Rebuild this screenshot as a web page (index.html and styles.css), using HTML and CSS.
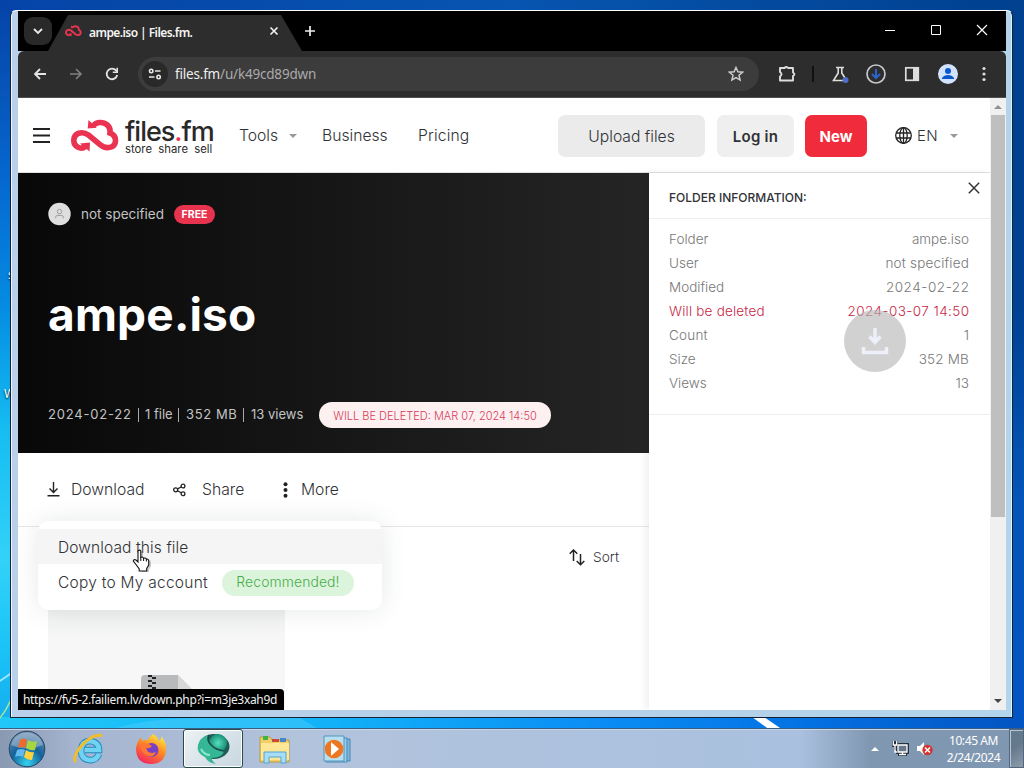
FILE: index.html
```html
<!DOCTYPE html>
<html lang="en">
<head>
<meta charset="utf-8">
<title>ampe.iso | Files.fm.</title>
<link rel="stylesheet" href="styles.css">
</head>
<body>
<div class="desktop">
  <svg class="wallpaper" width="1024" height="768" viewBox="0 0 1024 768">
    <path d="M-5 684Q5 678 14 671" stroke="#9be6ff" stroke-width="2" fill="none"/>
    <path d="M-2 720Q6 712 13 695" stroke="#9ee89a" stroke-width="1.5" fill="none"/>
    <path d="M110 730Q150 716 230 718H300L320 730Z" fill="#54cffb" opacity=".4"/>
    <path d="M752 717H764L783 730H770Z" fill="#fff"/>
  </svg>
  <span class="icon-label first">s</span>
  <span class="icon-label second">W</span>

  <div class="window">
    <div class="tabstrip">
      <div class="tab-search"><svg width="12" height="12" viewBox="0 0 12 12"><path d="M2 4l4 4 4-4" fill="none" stroke="#e8e8e8" stroke-width="1.8"/></svg></div>
      <div class="tab">
        <svg class="tab-icon" width="17" height="12" viewBox="0 0 48 34"><use href="#cloud"/></svg>
        <span class="tab-title">ampe.iso | Files.fm.</span>
        <svg width="10" height="10" viewBox="0 0 10 10"><path d="M1.5 1.5l7 7m0-7l-7 7" stroke="#eee" stroke-width="1.7"/></svg>
      </div>
      <svg class="new-tab" width="12" height="12" viewBox="0 0 12 12"><path d="M6 1v10M1 6h10" stroke="#eee" stroke-width="1.7"/></svg>
      <div class="controls">
        <svg width="12" height="12" viewBox="0 0 12 12"><path d="M1 6.500h10" stroke="#fff"/></svg>
        <svg width="12" height="12" viewBox="0 0 12 12"><path d="M1.500 1.500h9v9h-9z" stroke="#fff" fill="none"/></svg>
        <svg width="12" height="12" viewBox="0 0 12 12"><path d="M1 1l10 10m0-10L1 11" stroke="#fff" stroke-width="1.2"/></svg>
      </div>
    </div>

    <div class="toolbar">
      <div class="nav-buttons">
        <svg width="14" height="14" viewBox="0 0 14 14"><path d="M13 7H2m5-5L2 7l5 5" fill="none" stroke="#e4e4e4" stroke-width="1.8"/></svg>
        <svg width="14" height="14" viewBox="0 0 14 14"><path d="M1 7h11M7 2l5 5-5 5" fill="none" stroke="#808080" stroke-width="1.6"/></svg>
        <svg width="14" height="14" viewBox="0 0 14 14"><path d="M12.200 8A5.300 5.300 0 1 1 11 3.400L12.500 5" fill="none" stroke="#e4e4e4" stroke-width="1.8"/><path d="M13 .8V6H7.800V4.500h3.600V.8z" fill="#e4e4e4"/></svg>
      </div>
      <div class="omnibox">
        <div class="site-info"><svg width="14" height="12" viewBox="0 0 14 12"><g fill="none" stroke="#e8e8e8" stroke-width="1.6"><circle cx="3.200" cy="3" r="1.700"/><path d="M7 3h5.500M1 9h5.500"/><circle cx="10.600" cy="9" r="1.700"/></g></svg></div>
        <div class="url"><b>files.fm</b>/u/k49cd89dwn</div>
        <svg width="16" height="16" viewBox="0 0 16 16"><path d="M8 1.500l1.900 4.300 4.700.4-3.600 3.100 1.100 4.600L8 11.500l-4.100 2.400L5 9.300 1.400 6.200l4.700-.4z" fill="none" stroke="#ccc" stroke-width="1.500"/></svg>
      </div>
      <div class="extensions">
        <svg width="20" height="20" viewBox="0 0 20 20"><path d="M3 4H7.500Q9.300 2 11 4H16V8.500Q18.800 10 16 12V16.500H3V12.500Q6 10.300 3 8z" fill="none" stroke="#ddd" stroke-width="1.900" stroke-linejoin="round"/></svg>
        <i class="divider"></i>
        <svg width="20" height="20" viewBox="0 0 20 20"><path d="M6 3.500h8M8.200 3.500V9L3.500 16.500h13L11.800 9V3.500" fill="none" stroke="#ddd" stroke-width="1.600"/><circle cx="15.500" cy="16" r="3" fill="#4b70c8"/></svg>
        <svg width="20" height="20" viewBox="0 0 20 20"><circle cx="10" cy="10" r="9" fill="none" stroke="#c4c8cc" stroke-width="1.700"/><path d="M10 5v9M6 10l4 4 4-4" fill="none" stroke="#2c64cc" stroke-width="2"/></svg>
        <svg width="20" height="20" viewBox="0 0 20 20"><rect x="3.800" y="3.800" width="12.500" height="12.500" fill="none" stroke="#ddd" stroke-width="1.700"/><path d="M11 4h5v12h-5z" fill="#ddd"/></svg>
        <svg width="20" height="20" viewBox="0 0 20 20"><circle cx="10" cy="10" r="10" fill="#d4e3fd"/><circle cx="10" cy="7" r="3" fill="#0b57d0"/><path d="M4 15v-1q2-3 6-3t6 3v1z" fill="#0b57d0"/></svg>
        <svg width="20" height="20" viewBox="0 0 20 20"><g fill="#ddd"><circle cx="10" cy="4.500" r="1.600"/><circle cx="10" cy="10" r="1.600"/><circle cx="10" cy="15.500" r="1.600"/></g></svg>
      </div>
    </div>

    <div class="viewport">
      <div class="page">
        <header class="site-header">
          <svg class="hamburger" width="17" height="17" viewBox="0 0 17 17"><path d="M0 2h17M0 8.500h17M0 15h17" stroke="#222" stroke-width="1.800"/></svg>
          <svg class="logo-mark" width="48" height="34" viewBox="0 0 48 34"><defs><g id="cloud"><path d="M14.500 27.500C10 31 2.800 28 2.800 21.500C2.800 14 11 11.500 17.500 16L29 25.500C35 31 44.500 29 44.500 21.500Q44.500 16 39 14C40 7 34 3 28.500 3.500Q24 3.900 22 7" fill="none" stroke="#e93350" stroke-width="5.600"/><path d="M17.500 1l-.8 8.500 9-.7zM9 24.500l10-.9-.5 9z" fill="#e93350"/></g></defs><use href="#cloud"/></svg>
          <div class="wordmark"><div class="brand">files<em>.</em>fm</div><div class="slogan">store&nbsp; share&nbsp; sell</div></div>
          <nav class="site-nav"><span class="tools">Tools</span><i class="caret"></i><span class="business">Business</span><span class="pricing">Pricing</span></nav>
          <div class="actions"><div class="btn upload">Upload files</div><div class="btn login">Log in</div><div class="btn new">New</div></div>
          <svg class="globe" width="17" height="17" viewBox="0 0 17 17"><g fill="none" stroke="#222" stroke-width="1.300"><circle cx="8.500" cy="8.500" r="7.800"/><ellipse cx="8.500" cy="8.500" rx="3.700" ry="7.800"/><path d="M1 6h15M1 11h15M8.500 1v15"/></g></svg>
          <span class="lang">EN</span><i class="caret"></i>
        </header>

        <div class="columns">
          <main class="main">
            <section class="hero">
              <div class="owner">
                <svg width="23" height="24" viewBox="0 0 24 24"><circle cx="12" cy="12" r="11.700" fill="#dedede"/><g fill="none" stroke="#999" stroke-width="1"><circle cx="12" cy="9.500" r="2.300"/><path d="M8 16.500v-1.200q0-1.800 2-1.800h4q2 0 2 1.800v1.200"/></g></svg>
                <span class="owner-name">not specified</span><span class="free">FREE</span>
              </div>
              <h1>ampe.iso</h1>
              <div class="facts"><span class="fact date">2024-02-22</span><span class="fact count">1 file</span><span class="fact size">352 MB</span><span class="fact views">13 views</span><span class="expiry">WILL BE DELETED: MAR 07, 2024 14:50</span></div>
            </section>
            <section class="action-bar">
              <svg class="ic-download" width="13" height="15" viewBox="0 0 13 15"><path d="M6.500 0v10M2.500 6.500l4 4 4-4M.5 13.700h12" fill="none" stroke="#222" stroke-width="1.400"/></svg><span class="download">Download</span>
              <svg class="ic-share" width="13" height="14" viewBox="0 0 13 14"><g fill="none" stroke="#222" stroke-width="1.300"><circle cx="2.700" cy="6.800" r="2"/><circle cx="10" cy="3" r="1.900"/><circle cx="10" cy="10.800" r="1.900"/><path d="M4.500 5.900L8.200 4M4.500 7.800l3.700 2"/></g></svg><span class="share">Share</span>
              <svg class="ic-more" width="5" height="16" viewBox="0 0 5 16"><g fill="#222"><circle cx="2.500" cy="2.300" r="2"/><circle cx="2.500" cy="8" r="2"/><circle cx="2.500" cy="13.700" r="2"/></g></svg><span class="more">More</span>
            </section>
            <section class="files">
              <div class="sort"><svg width="16" height="17" viewBox="0 0 16 17"><path d="M4.500 12V1M.7 4.700L4.500 1l3.800 3.700M11.500 5v10.700M7.700 12l3.800 3.700 3.800-3.700" fill="none" stroke="#222" stroke-width="1.500"/></svg><span>Sort</span></div>
              <div class="thumb"><svg width="60" height="60" viewBox="0 0 60 60"><path d="M4 0h33l19 20v40H0V4q0-4 4-4z" fill="#b9babc"/><path d="M37 0l17 17h-17z" fill="#d8d8d8"/><path d="M9 0v18" stroke="#222" stroke-width="4" stroke-dasharray="2 3"/><path d="M13 2v18" stroke="#222" stroke-width="4" stroke-dasharray="2 3"/></svg></div>
            </section>
          </main>
          <aside class="info">
            <div class="info-head"><span>FOLDER INFORMATION:</span><svg width="12" height="12" viewBox="0 0 12 12"><path d="M.8.8l10.400 10.400m0-10.400L.8 11.200" stroke="#333" stroke-width="1.500"/></svg></div>
            <div class="info-list">
              <div class="row"><span>Folder</span><span>ampe.iso</span></div>
              <div class="row"><span>User</span><span class="user">not specified</span></div>
              <div class="row"><span>Modified</span><span class="num">2024-02-22</span></div>
              <div class="row warn"><span class="deleted">Will be deleted</span><span class="num stamp">2024-03-07 14:50</span></div>
              <div class="row"><span class="count-label">Count</span><span>1</span></div>
              <div class="row"><span>Size</span><span class="user">352 MB</span></div>
              <div class="row"><span>Views</span><span>13</span></div>
            </div>
            <svg class="float-download" width="62" height="62" viewBox="0 0 62 62"><circle cx="31" cy="31" r="31" fill="#b8b8b8" opacity=".65"/><path d="M31 18v14m-5.500-5.500L31 32.500l5.500-6M19.500 37v5.500h23V37" fill="none" stroke="#edf0f8" stroke-width="3.500"/></svg>
          </aside>
        </div>

        <div class="dropdown">
          <div class="option active">Download this file</div>
          <div class="option"><span class="copy">Copy to My account</span><span class="tag">Recommended!</span></div>
        </div>
        <div class="status">https://fv5-2.failiem.lv/down.php?i=m3je3xah9d</div>
      </div>
      <div class="scrollbar"><i class="up"></i><div class="handle"></div><i class="down"></i></div>
    </div>
  </div>

  <svg class="pointer" width="21" height="24" viewBox="0 0 21 24"><path d="M6.500 2q1.700-1.300 2.500.5v6q2-1 2.800.8 2-.8 2.700 1 2.200-.5 2.500 1.600v4.600l-2 3V22H7.500v-2L4 15.500 1.500 12q.4-2 2.500-1l2.300 2z" fill="#777" opacity=".4" transform="translate(2 1)"/><path d="M6 2q1.500-1.700 2.800 0v6.200q2-.8 2.800 1 2-.8 2.800.9 2-.3 2.300 1.600v4.300l-2 3.300V22H7.200v-2L4 15.500 1.300 12q.4-2 2.700-1l2 2z" fill="#fff" stroke="#111" stroke-width="1.100"/><path d="M8.800 8v4m2.800-3v3m2.800-2v2.500" stroke="#111"/></svg>

  <div class="taskbar">
    <svg class="start" width="38" height="38" viewBox="0 0 38 38"><defs><radialGradient id="orb" cx=".5" cy=".9" r=".9"><stop offset="0" stop-color="#35d2ef"/><stop offset=".5" stop-color="#13629c"/><stop offset="1" stop-color="#728fae"/></radialGradient></defs><circle cx="19" cy="19" r="17.800" fill="url(#orb)" stroke="#254563"/><path d="M3 15a16.500 16.500 0 0 1 32 0q-16 7-32 0z" fill="#fff" opacity=".3"/><path d="M12 10q4-3 7 0l-2 8q-3-2-7 0z" fill="#f06a2c"/><path d="M20 10q4 3 9 1l-2 9q-5 1-9-2z" fill="#a7d63e"/><path d="M9 20q4-2 8 0l-2 7q-4-2-8 0z" fill="#63b8ed"/><path d="M18 20q4 3 8 2l-2 8q-5 0-8-3z" fill="#ffd33d"/></svg>
    <svg class="ie" width="32" height="32" viewBox="0 0 32 32"><path d="M26 21q-3 7-10 6-8-1-8-10 1-9 9-9 9 1 9 9H12" fill="none" stroke="#2289bd" stroke-width="6.500"/><path d="M26 21q-3 7-10 6-8-1-8-10 1-9 9-9 9 1 9 9H12" fill="none" stroke="#70d3f4" stroke-width="4.700"/><path d="M3 29C-4 23 18-2 29 3" fill="none" stroke="#efbd2e" stroke-width="3"/></svg>
    <svg class="firefox" width="32" height="32" viewBox="0 0 32 32"><defs><linearGradient id="fire" x1=".8" y1="0" x2=".25" y2="1"><stop offset="0" stop-color="#fff044"/><stop offset=".45" stop-color="#ff8a22"/><stop offset="1" stop-color="#f32163"/></linearGradient></defs><path d="M18 1q5 3 6 7 3-2 2-5 6 7 5 14-1 14-15 14T1 17Q1 10 6 4q0 3 2 4 3-2 5-1 2-4 5-6z" fill="url(#fire)"/><circle cx="16.500" cy="17" r="7" fill="#7940c5"/><path d="M5 12q6-4 12 1-2 3-6 2 2 7 10 4-3 7-10 3-5-3-6-10z" fill="#ff7833"/></svg>
    <div class="running"><svg width="34" height="34" viewBox="0 0 34 34"><defs><radialGradient id="green"><stop offset="0" stop-color="#55e0bd"/><stop offset="1" stop-color="#1a8f76"/></radialGradient></defs><ellipse cx="18" cy="14.500" rx="15.500" ry="12.500" fill="#1d5c57"/><circle cx="22" cy="11" r="9" fill="url(#green)"/><path d="M13 3Q10 8 15 13T28 19Q27 26 15 26 17 30 20 32 12 31 9 25 0 21 2 13 4 5 13 3z" fill="#35b796"/><path d="M13 3Q10 8 15 13T28 19" fill="none" stroke="#174c49" stroke-width="1.500"/><path d="M5 17q3 6 9 6" fill="none" stroke="#8ae8cc" stroke-width="2"/></svg></div>
    <svg class="explorer" width="32" height="30" viewBox="0 0 32 30"><path d="M1 3h10l2 3h17v22H1z" fill="#f4ce66" stroke="#b99a46"/><path d="M4 2h5v4H4z" fill="#3eb448"/><path d="M13 5h7v3h-7z" fill="#c74b36"/><path d="M21 4h6v4h-6z" fill="#4b83c8"/><path d="M2 9h28v17H2z" fill="#ffe795"/><path d="M5 29V18h22v11h-5v-6H10v6z" fill="#a9ddf5" stroke="#4ca6d5"/></svg>
    <svg class="player" width="28" height="28" viewBox="0 0 28 28"><path d="M3 4h24v22H3z" fill="#7cb8db" stroke="#4788b9"/><path d="M3 3h21v24H3z" fill="#9acce5" stroke="#4788b9"/><path d="M1 1h20v25H1z" fill="#b8dff0" stroke="#5294bd"/><circle cx="11" cy="14" r="9.300" fill="#ee7621"/><path d="M8 7l8 7-8 7z" fill="#fff"/></svg>
    <div class="tray">
      <svg width="8" height="5" viewBox="0 0 8 5"><path d="M0 5l4-4 4 4z" fill="#fff"/></svg>
      <svg width="17" height="15" viewBox="0 0 17 15"><path d="M0 0h6v2h11v11h-2v2H6v-2H4V9H2V6H0z" fill="#26323e"/><path d="M6 4h9v7H6z" fill="#667889" stroke="#fff" stroke-width="1.300"/><path d="M7 13.500h7M10.500 11v2M1.300 0v4h3.400V0M3 4v7h2" fill="none" stroke="#fff" stroke-width="1.300"/></svg>
      <svg width="16" height="15" viewBox="0 0 16 15"><path d="M0 5h3l4-4v13l-4-4H0z" fill="#fff"/><circle cx="10.500" cy="9" r="5.200" fill="#d33332"/><path d="M8 6.500l5 5m0-5l-5 5" stroke="#fff" stroke-width="1.500"/></svg>
      <div class="clock"><span class="time">10:45 AM</span><span class="day">2/24/2024</span></div>
      <div class="show-desktop"></div>
    </div>
  </div>
</div>
</body>
</html>
```
FILE: styles.css
```css
* { box-sizing: border-box; }
body { margin: 0; overflow: hidden; font-family: Inter, "Liberation Sans", sans-serif; color: #303236; }
svg, i { display: block; flex: none; }
span { white-space: nowrap; }
.desktop {
  position: relative; width: 1024px; height: 768px; overflow: hidden;
  background:
    linear-gradient(90deg, #0543a8, #0755b0 50%, #00408f) 0 0 / 100% 11px no-repeat,
    linear-gradient(#00408f, #004193 300px, #0355b8 500px, #0355c3 720px) 100% 0 / 14px 718px no-repeat,
    linear-gradient(90deg, #20c8f8 0, #13b5f8 300px, #0a8df4 600px, #0472e4 800px, #0355c3 1013px) 0 717px / 100% 51px no-repeat,
    linear-gradient(#0543a8, #0755b8 90px, #0568cf 180px, #058de2 310px, #15bdf1 430px, #32d2f8 560px, #19c3f6 650px, #139eea);
}
.wallpaper { position: absolute; inset: 0; }
.icon-label { position: absolute; color: #fff; font: 12px "Noto Sans", sans-serif; text-shadow: 0 1px 2px #000; }
.first { left: 8px; top: 266px; }
.second { left: 4px; top: 385px; }
.window { position: absolute; left: 10px; top: 10px; width: 1003px; height: 708px; padding: 0 6px 7px 7px; border: 1px solid #152236; border-top-color: #fff; border-radius: 6px 6px 0 0; background: linear-gradient(90deg, #bacfea, #b4d1e9 60%, #b3d5eb); box-shadow: inset 1px 0 #edf6fd, inset -1px 0 #d8f4ff; }
.tabstrip { height: 40px; background: #000; display: flex; align-items: center; }
.tab-search { width: 28px; height: 28px; margin-left: 6px; border-radius: 9px; background: #292929; display: grid; place-items: center; }
.tab { width: 256px; height: 36px; align-self: flex-end; margin-left: -4px; padding: 0 25px 0 17px; background: #2d2d2d; clip-path: polygon(20px 0, 233px 0, 254px 100%, 0 100%); display: flex; align-items: center; }
.tab-icon { margin-top: -4px; }
.tab-title { width: 183px; margin: -2px 3px 0 7px; font: 600 12px "Noto Sans", sans-serif; color: #f4f4f4; letter-spacing: -.57px; }
.tab > svg:last-child { margin-top: -4px; }
.controls { margin: -2px 18px 0 auto; display: flex; gap: 34px; }
.toolbar { height: 47px; background: #2d2d2d; border-bottom: 1px solid #505050; border-radius: 6px 6px 0 0; display: flex; align-items: center; }
.nav-buttons { width: 105px; margin-left: 15px; display: flex; gap: 22px; }
.omnibox { width: 621px; height: 34px; padding: 0 15px 0 4px; border-radius: 17px; background: #3c3c3c; display: flex; align-items: center; }
.site-info { width: 26px; height: 26px; border-radius: 50%; background: #292929; display: grid; place-items: center; }
.url { flex: 1; margin: -1px 0 0 7px; font: 13.500px "Noto Sans", sans-serif; color: #aaa; letter-spacing: -.19px; }
.url b { color: #eee; font-weight: 400; }
.extensions { display: flex; align-items: center; gap: 16px; margin-left: 18px; }
.divider { width: 2px; height: 16px; background: #111; margin: 0 0 0 -1px; }
.viewport { height: 612px; display: flex; }
.page { position: relative; width: 972px; height: 612px; overflow: hidden; background: #fff; }
.site-header { height: 75px; border-bottom: 1px solid #e1e1e1; display: flex; align-items: center; font-weight: 300; font-size: 15.700px; }
.hamburger { margin-left: 15px; margin-top: 1px; }
.logo-mark { margin-left: 21px; margin-top: 2px; }
.wordmark { width: 93px; margin: 2px 0 0 6px; color: #292929; }
.brand { font-size: 27px; line-height: 25px; font-weight: 500; white-space: nowrap; letter-spacing: -1px; }
.brand em { color: #e93350; font-style: normal; }
.slogan { font-size: 11.300px; line-height: 10px; font-weight: 400; white-space: nowrap; }
.site-nav { width: 319px; margin: 1px 0 0 21px; display: flex; align-items: center; }
.tools { width: 50px; }
.caret { border: 4px solid transparent; border-top-color: #999; border-bottom: 0; margin-top: 1px; }
.business { width: 96px; margin-left: 25px; }
.pricing { letter-spacing: .15px; }
.actions { display: flex; margin-top: 2px; }
.btn { height: 42px; border-radius: 7px; background: #ebebeb; display: grid; place-items: center; white-space: nowrap; }
.upload { width: 147px; }
.login { width: 77px; margin-left: 12px; font-weight: 600; font-size: 15px; letter-spacing: .25px; background: #efefef; }
.new { width: 62px; margin-left: 11px; font-weight: 700; font-size: 15px; color: #fff; background: #f02b3c; }
.globe { margin-left: 28px; margin-top: 1px; }
.lang { width: 33px; margin: 1px 0 0 5px; font-size: 15px; letter-spacing: .4px; }
.columns { height: 537px; display: flex; }
.main { width: 631px; }
.hero { height: 280px; padding: 29px 30px 0; background: linear-gradient(90deg, #080808, #252525); color: #c3c3c3; }
.owner { height: 24px; display: flex; align-items: center; font-size: 13.500px; }
.owner-name { width: 93px; margin-left: 10px; }
.free { width: 41px; height: 19px; border-radius: 10px; background: #e8334f; color: #fff; font-weight: 700; font-size: 10.500px; line-height: 20px; text-align: center; }
h1 { margin: 55px 0 0; height: 66px; font-size: 46px; line-height: 66px; letter-spacing: .2px; color: #fff; }
.facts { height: 26px; margin-top: 55px; display: flex; align-items: center; font-size: 13px; }
.fact { height: 14px; line-height: 13px; border-right: 1px solid #aaa; }
.date { width: 91px; letter-spacing: .8px; }
.count { width: 40px; padding-left: 6px; }
.size { width: 65px; padding-left: 7px; letter-spacing: .6px; }
.views { width: 75px; padding-left: 7px; border: 0; }
.expiry { width: 232px; height: 26px; border-radius: 13px; background: #fdf0f1; color: #d63b5a; font-size: 11px; font-weight: 300; line-height: 28px; text-align: center; }
.action-bar { height: 74px; border-bottom: 1px solid #e6e6e6; padding-left: 29px; display: flex; align-items: center; font-size: 15.700px; font-weight: 300; }
.action-bar span { margin-top: -1px; }
.action-bar .download { width: 102px; margin-left: 11px; }
.action-bar .share { width: 81px; margin-left: 16px; }
.action-bar .more { margin-left: 13px; }
.files { height: 183px; overflow: hidden; }
.sort { display: flex; align-items: center; justify-content: flex-end; gap: 8px; height: 60px; padding-right: 30px; font-size: 13.700px; font-weight: 300; }
.thumb { width: 237px; height: 123px; margin: 0 0 0 30px; padding: 88px 0 0 93px; background: linear-gradient(#f0f1f1 0, #f0f1f1 23px, #f7f7f7 55px); }
.info { position: relative; width: 341px; background: #fff; box-shadow: -3px 0 8px #0001; }
.info-head { height: 46px; border-bottom: 1px solid #eee; padding: 9px 10px 0 20px; display: flex; justify-content: space-between; }
.info-head span { margin-top: 8px; font-size: 12px; line-height: 16px; font-weight: 500; }
.info-list { height: 196px; padding: 8px 21px 0 20px; border-bottom: 1px solid #eee; }
.row { height: 24px; line-height: 24px; display: flex; justify-content: space-between; font-size: 13.500px; font-weight: 300; color: #777; }
.user { letter-spacing: .18px; }
.num { letter-spacing: .55px; margin-right: -.55px; }
.stamp { letter-spacing: .42px; }
.deleted, .count-label { letter-spacing: .2px; }
.warn { color: #c82646; }
.float-download { position: absolute; left: 195px; top: 137px; }
.dropdown { position: absolute; left: 20px; top: 423px; width: 344px; height: 89px; padding-top: 8px; border-radius: 10px; background: #fff; box-shadow: 0 0 25px #46505a22; font-size: 15.500px; font-weight: 300; }
.option { height: 35px; padding: 2px 0 0 20px; display: flex; align-items: center; letter-spacing: .12px; }
.active { background: #f5f5f5; }
.copy { width: 164px; letter-spacing: .25px; }
.tag { width: 132px; height: 26px; border-radius: 13px; background: #dcf4dc; color: #46ad49; line-height: 25px; text-align: center; font-size: 13.900px; }
.status { position: absolute; left: 0; bottom: 0; width: 266px; height: 21px; padding-left: 5px; border-radius: 0 4px 0 0; background: #000; color: #f0f0f0; font: 12px/21px "Noto Sans", sans-serif; white-space: nowrap; letter-spacing: -.32px; }
.scrollbar { width: 16px; background: #f0f0f0; display: flex; flex-direction: column; align-items: center; }
.scrollbar i { border: 4px solid transparent; }
.up { margin-top: 3px; border-bottom-color: #909090 !important; }
.handle { width: 14px; height: 402px; margin-top: 6px; background: #bfbfbf; }
.down { margin: auto 0 3px; border-top-color: #444 !important; }
.pointer { position: absolute; left: 132px; top: 549px; }
.taskbar { position: absolute; left: 0; bottom: 0; width: 1024px; height: 40px; border-top: 1px solid #385e85; box-shadow: inset 0 1px #c9d8e8; background: linear-gradient(90deg, #8999b2, #a5b4cf 75px, #b2c3dc 300px, #a9c1df 800px, #8097b1 870px, #8097b1); display: flex; align-items: center; }
.start { margin-left: 8px; }
.ie { margin-left: 27px; }
.firefox { margin-left: 30px; }
.running { width: 60px; height: 39px; margin-left: 16px; border: 1px solid #264b49; border-radius: 3px; box-shadow: inset 0 0 0 1px #fff; background: linear-gradient(135deg, #edf2f3, #c7d6e0); display: grid; place-items: center; }
.explorer { margin-left: 16px; }
.player { margin-left: 32px; }
.tray { margin-left: auto; display: flex; align-items: center; color: #fff; }
.tray > svg:nth-child(2) { margin-left: 13px; }
.tray > svg:nth-child(3) { margin-left: 8px; }
.clock { width: 76px; padding-left: 5px; display: flex; flex-direction: column; align-items: center; font: 12px/17px "Noto Sans", sans-serif; letter-spacing: -.4px; }
.show-desktop { width: 15px; height: 39px; border: 1px solid #52677d; box-shadow: inset 1px 1px #b6c4d3; background: linear-gradient(145deg, #65798d 45%, #8d9cab); }
```
